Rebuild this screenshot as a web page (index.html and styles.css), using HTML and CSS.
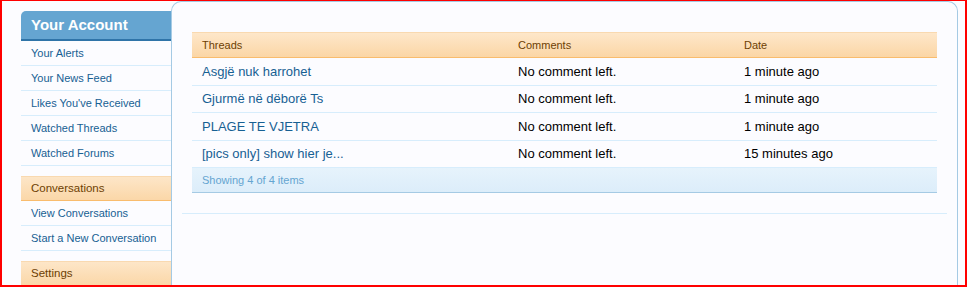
FILE: index.html
```html
<!DOCTYPE html>
<html lang="en">
<head>
    <meta charset="UTF-8">
    <title>Your Account</title>
    <link rel="stylesheet" href="styles.css">
</head>
<body>
    <div class="frame">
        <div class="sidebar">
            <h3 class="primary-heading">Your Account</h3>
            <ul class="menu">
                <li><a href="#">Your Alerts</a></li>
                <li><a href="#">Your News Feed</a></li>
                <li><a href="#">Likes You've Received</a></li>
                <li><a href="#">Watched Threads</a></li>
                <li><a href="#">Watched Forums</a></li>
            </ul>
            <h4 class="section-heading">Conversations</h4>
            <ul class="menu">
                <li><a href="#">View Conversations</a></li>
                <li><a href="#">Start a New Conversation</a></li>
            </ul>
            <h4 class="section-heading">Settings</h4>
        </div>

        <div class="main">
            <div class="threads">
                <div class="row head">
                    <div>Threads</div>
                    <div>Comments</div>
                    <div>Date</div>
                </div>
                <div class="row">
                    <a href="#">Asgjë nuk harrohet</a>
                    <div>No comment left.</div>
                    <div>1 minute ago</div>
                </div>
                <div class="row">
                    <a href="#">Gjurmë në dëborë Ts</a>
                    <div>No comment left.</div>
                    <div>1 minute ago</div>
                </div>
                <div class="row">
                    <a href="#">PLAGE TE VJETRA</a>
                    <div>No comment left.</div>
                    <div>1 minute ago</div>
                </div>
                <div class="row">
                    <a href="#">[pics only] show hier je...</a>
                    <div>No comment left.</div>
                    <div>15 minutes ago</div>
                </div>
                <div class="footer">Showing 4 of 4 items</div>
            </div>
            <div class="divider"></div>
        </div>
    </div>
</body>
</html>
```

FILE: styles.css
```css
body {
    margin: 0;
    font-family: 'Liberation Sans', Arial, sans-serif;
    background-color: #fcfcff;
}

.frame {
    height: 287px;
    box-sizing: border-box;
    border: 2px solid #ff0000;
    border-top-width: 1px;
    padding-left: 19px;
    padding-right: 7px;
    display: flex;
    overflow: hidden;
}

.sidebar {
    width: 150px;
    flex-shrink: 0;
    margin-top: 10px;
}

.primary-heading {
    margin: 0;
    height: 28px;
    line-height: 28px;
    padding-left: 10px;
    background-color: #65a5d1;
    border-bottom: 2px solid #2f74a8;
    border-top-left-radius: 5px;
    color: #ffffff;
    font-size: 15px;
    font-weight: bold;
}

.menu {
    list-style: none;
    margin: 0 0 10px 0;
    padding: 0;
}

.menu li {
    height: 24px;
    line-height: 24px;
    border-bottom: 1px solid #d7edfc;
    padding-left: 10px;
    font-size: 11px;
}

.menu a {
    color: #176093;
    text-decoration: none;
}

.section-heading {
    margin: 0;
    height: 23px;
    line-height: 23px;
    padding-left: 10px;
    background: linear-gradient(#fde6c8, #fbd7a8);
    border-top: 1px solid #f9d9b0;
    border-bottom: 1px solid #f9bc6d;
    color: #6d3f03;
    font-size: 11.5px;
    font-weight: normal;
}

.main {
    flex: 1;
    border: 1px solid #a5cae4;
    border-bottom: none;
    border-radius: 10px 10px 0 0;
    background-color: #fcfcff;
    padding: 30px 20px 0 20px;
}

.threads {
    display: flex;
    flex-direction: column;
}

.row {
    display: grid;
    grid-template-columns: 316px 226px 1fr;
    height: 26.5px;
    align-items: center;
    border-bottom: 1px solid #d7edfc;
    font-size: 13px;
    color: #000000;
}

.row > * {
    padding-left: 10px;
}

.row a {
    color: #176093;
    text-decoration: none;
}

.row.head {
    height: 24px;
    background: linear-gradient(#fee7ca, #fbd6a6);
    border-top: 1px solid #f9d9b0;
    border-bottom: 1px solid #f9bc6d;
    font-size: 11px;
    color: #6d3f03;
}

.footer {
    height: 24px;
    line-height: 24px;
    padding-left: 10px;
    background: linear-gradient(#e6f3fc, #dcedfa);
    border-bottom: 1px solid #a5cae4;
    font-size: 11px;
    color: #65a5d1;
}

.divider {
    margin: 20px -10px 0 -10px;
    border-top: 1px solid #d7edfc;
}
```
